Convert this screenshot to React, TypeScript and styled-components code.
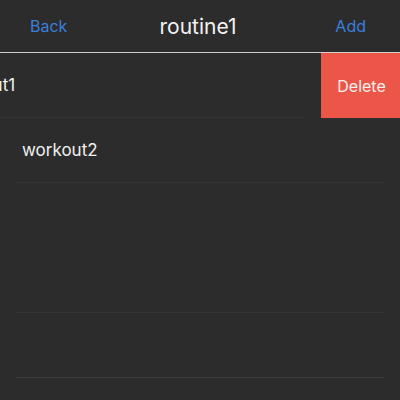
import React from "react";
import styled, { createGlobalStyle } from "styled-components";

const Global = createGlobalStyle`
  html, body { margin: 0; padding: 0; background: #2c2c2c; }
  body { font-family: Inter, "Noto Sans", sans-serif; -webkit-font-smoothing: antialiased; }
`;

const Screen = styled.div`
  width: 400px;
  height: 400px;
  overflow: hidden;
  background: #2c2c2c;
  display: flex;
  flex-direction: column;
`;

const Header = styled.header`
  height: 52px;
  border-bottom: 1px solid #cfcfcf;
  display: grid;
  grid-template-columns: 1fr auto 1fr;
  align-items: center;
  padding: 0 34px 0 30px;
  box-sizing: content-box;
`;

const NavButton = styled.span<{ $align: "left" | "right" }>`
  color: #3a7fdc;
  font-size: 16px;
  justify-self: ${(p) => (p.$align === "left" ? "start" : "end")};
`;

const Title = styled.h1`
  margin: 0;
  color: #f2f2f2;
  font-size: 21px;
  font-weight: 400;
`;

const List = styled.div`
  display: flex;
  flex-direction: column;
`;

const SwipeRow = styled.div`
  height: 65px;
  position: relative;
  display: flex;
`;

const RowContent = styled.div<{ $offset: number }>`
  flex: 0 0 400px;
  height: 65px;
  box-sizing: border-box;
  padding: 0 16px;
  display: flex;
  transform: translateX(${(p) => -p.$offset}px);
`;

const RowInner = styled.div<{ $line: boolean; $bright?: boolean }>`
  flex: 1;
  display: flex;
  align-items: center;
  padding-left: 6px;
  border-bottom: 1px solid
    ${(p) => (p.$line ? (p.$bright ? "#3d3d3d" : "#343434") : "transparent")};
  color: #f0f0f0;
  font-size: 17px;
`;

const DeleteAction = styled.div`
  position: absolute;
  right: 0;
  top: 0;
  width: 79px;
  height: 65px;
  background: #eb5649;
  color: #fbefee;
  font-size: 16px;
  display: flex;
  align-items: center;
  justify-content: center;
  padding-left: 2px;
  box-sizing: border-box;
`;

type Row = { label: string; line: boolean; bright?: boolean; swiped?: boolean };

const rows: Row[] = [
  { label: "workout1", line: true, swiped: true },
  { label: "workout2", line: true },
  { label: "", line: false },
  { label: "", line: true },
  { label: "", line: true, bright: true },
];

export default function App() {
  return (
    <Screen>
      <Global />
      <Header>
        <NavButton $align="left">Back</NavButton>
        <Title>routine1</Title>
        <NavButton $align="right">Add</NavButton>
      </Header>
      <List>
        {rows.map((r, i) => (
          <SwipeRow key={i}>
            <RowContent $offset={r.swiped ? 79 : 0}>
              <RowInner $line={r.line} $bright={r.bright}>
                {r.label}
              </RowInner>
            </RowContent>
            {r.swiped && <DeleteAction>Delete</DeleteAction>}
          </SwipeRow>
        ))}
      </List>
    </Screen>
  );
}
